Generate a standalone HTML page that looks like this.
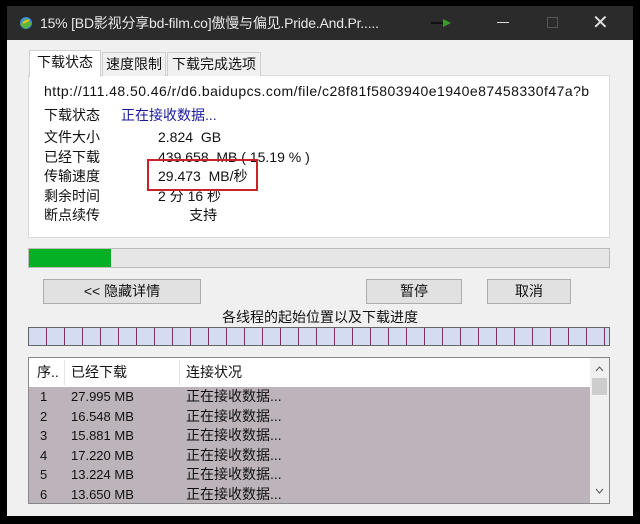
<!DOCTYPE html>
<html><head><meta charset="utf-8"><style>
*{margin:0;padding:0;box-sizing:border-box}
body{width:640px;height:524px;background:#000;position:relative;overflow:hidden;font-family:"Liberation Sans","Noto Sans CJK SC",sans-serif;font-size:14px;color:#111}
.a{position:absolute}
.win{left:7px;top:6px;width:626px;height:510px;background:#f0f0f0}
.title{left:7px;top:6px;width:626px;height:34px;background:#2b2b2b;color:#e8e8e8;font-size:14px;line-height:34px}
.tab{top:52px;height:24px;border:1px solid #d0d0d0;border-bottom:none;background:#f0f0f0;text-align:center;line-height:22px}
.btn{background:#e1e1e1;border:1px solid #adadad;text-align:center;line-height:23px;height:25px;top:279px}
</style></head><body>
<div class="a win"></div>
<div class="a title">
 <svg class="a" style="left:10px;top:9px" width="18" height="16"><circle cx="9" cy="8" r="6" fill="#3a8fd8"/><path d="M3 10 L9 3 L15 9 L9 14Z" fill="#5cb83a"/><path d="M6 8 L12 5" stroke="#f4c020" stroke-width="2"/></svg>
 <span class="a" style="left:33px;letter-spacing:-0.2px">15% [BD影视分享bd-film.co]傲慢与偏见.Pride.And.Pr.....</span>
 <span class="a" style="left:424px;top:16px;width:14px;height:2px;background:#111"></span>
 <span class="a" style="left:436px;top:13px;width:0;height:0;border-left:8px solid #3a9a2a;border-top:4px solid transparent;border-bottom:4px solid transparent"></span>
 <span class="a" style="left:490px;top:16px;width:12px;height:1px;background:#ddd"></span>
 <span class="a" style="left:540px;top:11px;width:11px;height:11px;border:1px solid #555"></span>
 <span class="a" style="left:585px;font-size:20px;color:#ddd">✕</span>
</div>
<div class="a" style="left:28px;top:75px;width:582px;height:163px;background:#fff;border:1px solid #d9d9d9"></div>
<div class="a tab" style="left:29px;top:50px;width:72px;height:27px;background:#fff">下载状态</div>
<div class="a tab" style="left:102px;width:64px">速度限制</div>
<div class="a tab" style="left:167px;width:94px">下载完成选项</div>
<div class="a" style="left:44px;top:83px;width:546px;overflow:hidden;white-space:nowrap;letter-spacing:0.45px">http://111.48.50.46/r/d6.baidupcs.com/file/c28f81f5803940e1940e87458330f47a?bk</div>
<div class="a" style="left:44px;top:105px">下载状态</div>
<div class="a" style="left:121px;top:105px;color:#1a1a9a">正在接收数据...</div>
<div class="a" style="left:44px;top:128px;line-height:19.5px">文件大小<br>已经下载<br>传输速度<br>剩余时间<br>断点续传</div>
<div class="a" style="left:158px;top:128px;line-height:19.5px;white-space:pre">2.824  GB
439.658  MB ( 15.19 % )
29.473  MB/秒
2 分 16 秒
        支持</div>
<div class="a" style="left:147px;top:159px;width:111px;height:32px;border:2px solid #c8232a"></div>
<div class="a" style="left:28px;top:248px;width:582px;height:20px;background:#e6e6e6;border:1px solid #bcbcbc"><div style="width:82px;height:18px;background:#06b025"></div></div>
<div class="a btn" style="left:43px;width:158px">&lt;&lt; 隐藏详情</div>
<div class="a btn" style="left:366px;width:96px">暂停</div>
<div class="a btn" style="left:487px;width:84px">取消</div>
<div class="a" style="left:0;width:640px;top:307px;text-align:center">各线程的起始位置以及下载进度</div>
<div class="a" style="left:28px;top:327px;width:582px;height:19px;border:1px solid #666;background:repeating-linear-gradient(90deg,#d4dcf2 0,#d4dcf2 17px,#7a3060 17px,#7a3060 18px,#d4dcf2 18px);"></div>
<div class="a" style="left:28px;top:357px;width:582px;height:147px;background:#fff;border:1px solid #888"></div>
<div class="a" style="left:29px;top:358px;width:561px;height:29px;line-height:29px;background:#fff">
 <span class="a" style="left:8px">序..</span><span class="a" style="left:35px;top:2px;width:1px;height:25px;background:#e5e5e5"></span>
 <span class="a" style="left:42px">已经下载</span><span class="a" style="left:150px;top:2px;width:1px;height:25px;background:#e5e5e5"></span>
 <span class="a" style="left:157px">连接状况</span>
</div>
<div class="a" style="left:29px;top:387px;width:561px;height:116px;background:#bdb4bb;overflow:hidden;font-size:13px">
 <div class="a" style="left:0;top:0;line-height:19.6px;width:561px">
 <div style="position:relative;height:19.6px"><span class="a" style="left:11px">1</span><span class="a" style="left:42px">27.995 MB</span><span class="a" style="left:157px;font-size:14px">正在接收数据...</span></div>
 <div style="position:relative;height:19.6px"><span class="a" style="left:11px">2</span><span class="a" style="left:42px">16.548 MB</span><span class="a" style="left:157px;font-size:14px">正在接收数据...</span></div>
 <div style="position:relative;height:19.6px"><span class="a" style="left:11px">3</span><span class="a" style="left:42px">15.881 MB</span><span class="a" style="left:157px;font-size:14px">正在接收数据...</span></div>
 <div style="position:relative;height:19.6px"><span class="a" style="left:11px">4</span><span class="a" style="left:42px">17.220 MB</span><span class="a" style="left:157px;font-size:14px">正在接收数据...</span></div>
 <div style="position:relative;height:19.6px"><span class="a" style="left:11px">5</span><span class="a" style="left:42px">13.224 MB</span><span class="a" style="left:157px;font-size:14px">正在接收数据...</span></div>
 <div style="position:relative;height:19.6px"><span class="a" style="left:11px">6</span><span class="a" style="left:42px">13.650 MB</span><span class="a" style="left:157px;font-size:14px">正在接收数据...</span></div>
 </div>
</div>
<div class="a" style="left:590px;top:358px;width:19px;height:145px;background:#f0f0f0">
 <svg class="a" style="left:5px;top:8px" width="9" height="6"><path d="M1 5 L4.5 1 L8 5" stroke="#555" fill="none"/></svg>
 <div class="a" style="left:2px;top:20px;width:15px;height:17px;background:#cdcdcd"></div>
 <svg class="a" style="left:5px;top:130px" width="9" height="6"><path d="M1 1 L4.5 5 L8 1" stroke="#555" fill="none"/></svg>
</div>
</body></html>
